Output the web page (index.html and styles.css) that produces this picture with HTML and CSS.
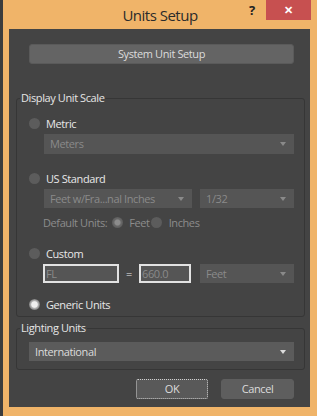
FILE: index.html
```html
<!DOCTYPE html>
<html>
<head>
<meta charset="utf-8">
<link rel="stylesheet" href="styles.css">
</head>
<body>
<div class="window">
  <div class="titlebar">
    <div class="title">Units Setup</div>
    <div class="help">?</div>
    <div class="close">&#x2715;</div>
  </div>
  <div class="panel">
    <div class="btn sys">System Unit Setup</div>
    <fieldset class="group display">
      <legend>Display Unit Scale</legend>
      <div class="row"><span class="radio"></span><span class="lbl">Metric</span></div>
      <div class="select dis full">Meters</div>
      <div class="row sp17"><span class="radio"></span><span class="lbl">US Standard</span></div>
      <div class="pair">
        <div class="select dis w148">Feet w/Fra...nal Inches</div>
        <div class="select dis w94">1/32</div>
      </div>
      <div class="defrow">
        <span class="dim">Default Units:</span>
        <span class="radio sel-dim g5"></span>
        <span class="dim g6">Feet</span>
        <span class="radio g1"></span>
        <span class="dim g7">Inches</span>
      </div>
      <div class="row sp17"><span class="radio"></span><span class="lbl">Custom</span></div>
      <div class="pair custom">
        <div class="textbox w76">FL</div>
        <span class="eq">=</span>
        <div class="textbox w52">660.0</div>
        <div class="select dis w94 ml9">Feet</div>
      </div>
      <div class="row sp14"><span class="radio sel"></span><span class="lbl">Generic Units</span></div>
    </fieldset>
    <fieldset class="group lighting">
      <legend>Lighting Units</legend>
      <div class="select act">International</div>
    </fieldset>
    <div class="buttons">
      <div class="btn ok">OK</div>
      <div class="btn cancel">Cancel</div>
    </div>
  </div>
</div>
</body>
</html>
```
FILE: styles.css
```css
* { box-sizing: border-box; }
html, body { margin: 0; padding: 0; }
body {
  width: 317px;
  height: 416px;
  overflow: hidden;
  font-family: "Open Sans", "Noto Sans", sans-serif;
  font-size: 11px;
  letter-spacing: -0.4px;
}
.window {
  width: 317px;
  height: 416px;
  display: flex;
  flex-direction: column;
  background: #f0b469;
  border-left: 3px solid #3c3c3c;
}
.titlebar {
  height: 29px;
  display: flex;
  align-items: flex-start;
  flex: none;
}
.title {
  flex: 1;
  margin-left: 71px;
  text-align: center;
  font-size: 15px;
  letter-spacing: -0.5px;
  line-height: 30px;
  color: #2b2b2b;
}
.help {
  width: 12px;
  margin-right: 8px;
  font-weight: bold;
  font-size: 13px;
  letter-spacing: 0;
  line-height: 20px;
  color: #222;
  text-align: center;
}
.close {
  width: 45px;
  height: 20px;
  margin-right: 6px;
  background: #c75050;
  color: #fff;
  font-size: 11px;
  font-weight: bold;
  line-height: 20px;
  text-align: center;
}
.panel {
  flex: 1;
  margin: 0 7px 9px 6px;
  background: #444444;
  display: flex;
  flex-direction: column;
}
.btn {
  height: 20px;
  background: #646464;
  border: 1px solid #5a5a5a;
  border-radius: 3px;
  color: #dcdcdc;
  text-align: center;
  line-height: 18px;
}
.sys { margin: 15px 16px 0 20px; }
.group {
  border: 1px solid #363636;
  border-radius: 3px;
  padding: 0;
  min-width: 0;
}
.group legend {
  margin-left: 3px;
  padding: 0 1px;
  line-height: 14px;
  color: #e6e6e6;
}
.display { margin: 27px 5px 0 7px; padding-bottom: 5px; }
.lighting { margin: 4px 5px 0 7px; padding-bottom: 8px; }
.row {
  display: flex;
  align-items: center;
  height: 14px;
  margin-top: 11px;
  margin-left: 12px;
}
.sp17 { margin-top: 17px; }
.sp14 { margin-top: 14px; }
.radio {
  width: 11px;
  height: 11px;
  border-radius: 50%;
  background: #5c5c5c;
  flex: none;
}
.radio.sel {
  background: radial-gradient(circle, #f0f0f0 0 2.8px, #bdbdbd 3.6px, #7a7a7a 5.5px);
}
.radio.sel-dim {
  background: radial-gradient(circle, #8c8c8c 0 2.5px, #6a6a6a 3.5px, #5c5c5c 5.5px);
}
.lbl { margin-left: 6px; color: #e8e8e8; }
.select {
  position: relative;
  height: 20px;
  line-height: 20px;
  padding-left: 6px;
  white-space: nowrap;
  overflow: hidden;
}
.select::after {
  content: "";
  position: absolute;
  right: 8px;
  top: 8px;
  border-left: 3px solid transparent;
  border-right: 3px solid transparent;
  border-top: 4px solid currentColor;
}
.select.dis { background: #555555; color: #8a8a8a; }
.select.full { margin: 4px 10px 0 27px; }
.select.act { background: #5b5b5b; color: #dcdcdc; margin: 7px 10px 0 12px; height: 19px; line-height: 19px; }
.pair {
  display: flex;
  height: 19px;
  margin: 4px 10px 0 27px;
  gap: 8px;
}
.pair .select { height: 19px; line-height: 19px; }
.w148 { width: 148px; }
.w94 { width: 94px; }
.w76 { width: 76px; }
.w52 { width: 52px; }
.defrow {
  display: flex;
  align-items: center;
  height: 14px;
  margin: 7px 0 0 26px;
}
.dim { color: #8c8c8c; }
.g5 { margin-left: 5px; }
.g6 { margin-left: 6px; }
.g1 { margin-left: 1px; }
.g7 { margin-left: 7px; }
.pair.custom { margin-left: 26px; gap: 0; }
.textbox {
  height: 19px;
  background: #555555;
  border: 2px solid #e2e2e2;
  color: #8a8a8a;
  line-height: 15px;
  padding-left: 1px;
  overflow: hidden;
}
.eq {
  width: 20px;
  text-align: center;
  color: #e8e8e8;
  line-height: 19px;
}
.ml9 { margin-left: 9px; }
.buttons {
  display: flex;
  justify-content: flex-end;
  gap: 13px;
  margin: 9px 16px 0 0;
}
.ok {
  width: 72px;
  background: #595959;
  border: 1px dotted #cfcfcf;
  border-radius: 2px;
}
.cancel {
  width: 73px;
  background: #5e5e5e;
  border-color: #5e5e5e;
}
```
